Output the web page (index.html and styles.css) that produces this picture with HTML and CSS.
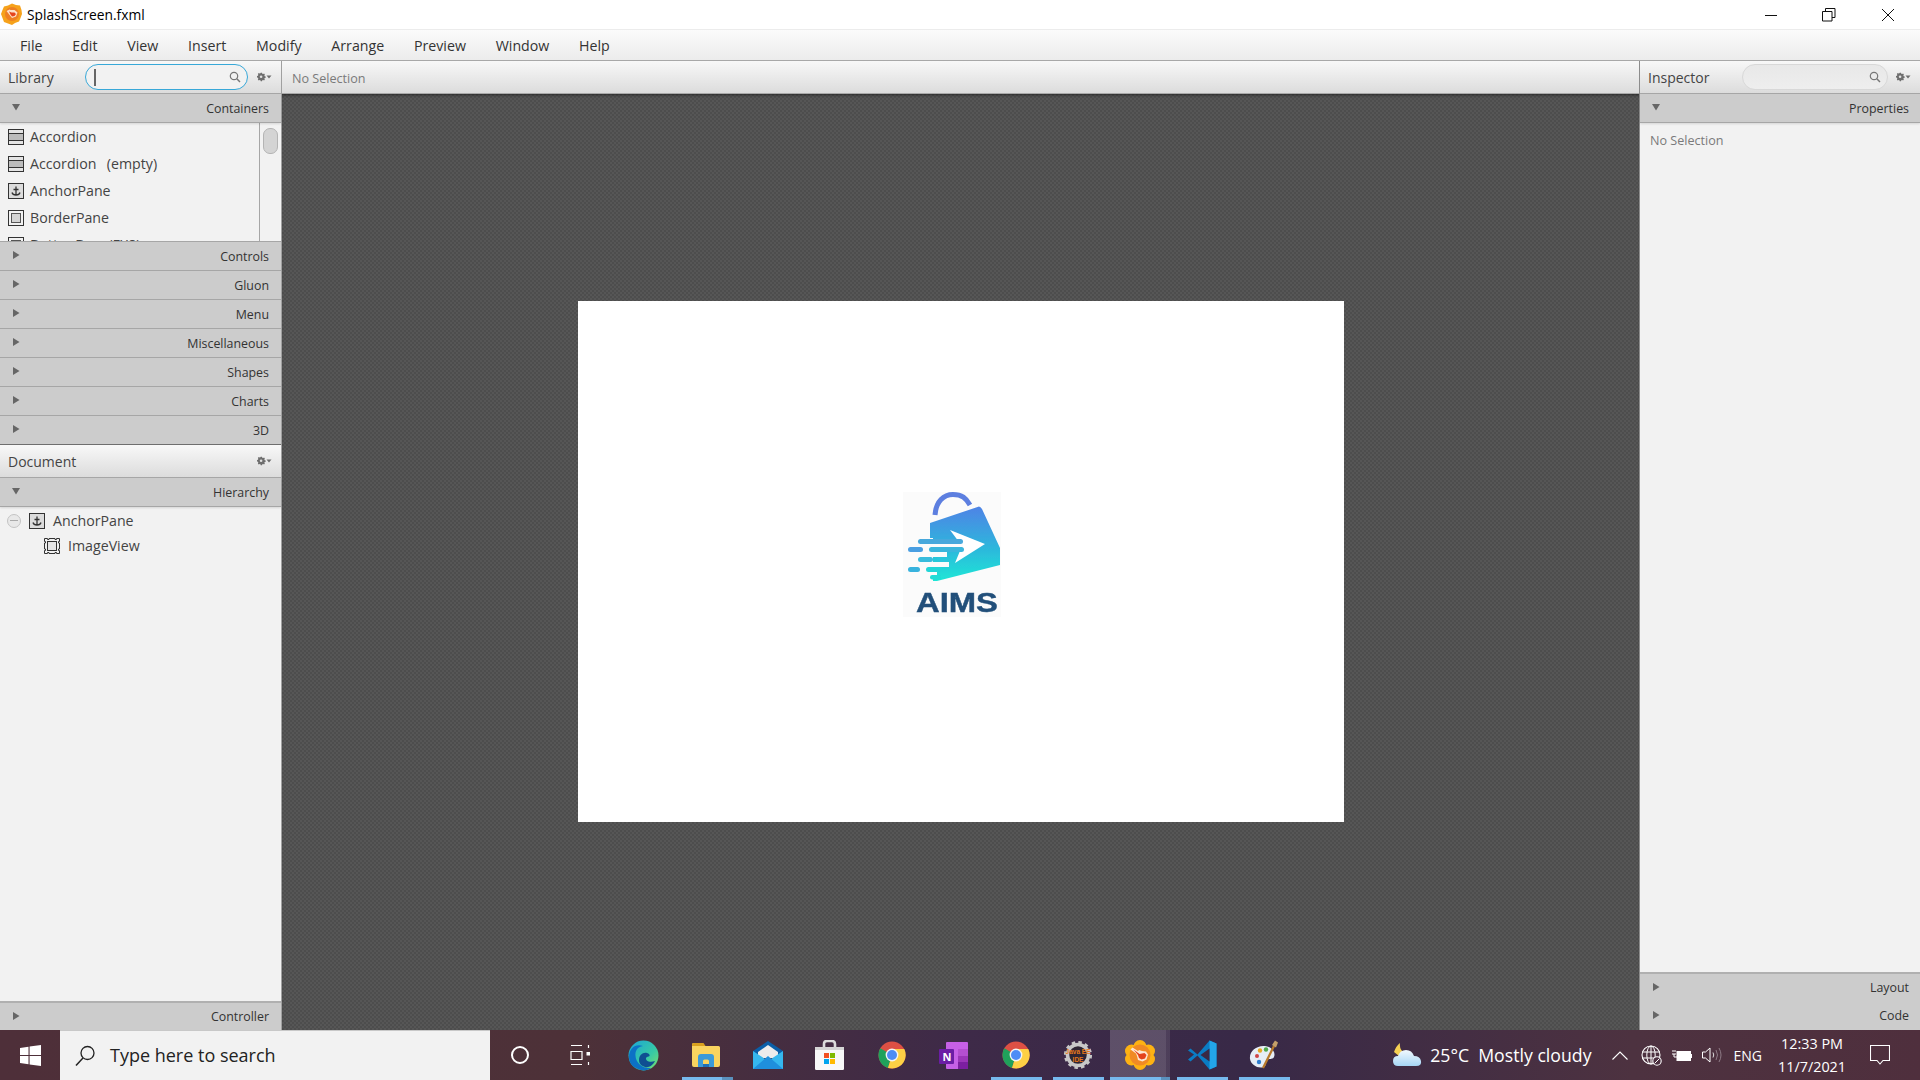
FILE: index.html
```html
<!DOCTYPE html>
<html lang="en">
<head>
<meta charset="utf-8">
<title>SplashScreen.fxml</title>
<link rel="stylesheet" href="styles.css">
</head>
<body>
<svg class="defs" width="0" height="0">
  <defs>
    <symbol id="gear" viewBox="0 0 16 10">
      <path d="M5 0.500h1.600l.3 1.200 1.100.5 1.100-.6 1 1-.6 1.100.4 1 1.200.4v1.400l-1.200.3-.4 1.100.6 1-1 1-1.100-.6-1.100.5-.3 1.100H5l-.3-1.100-1.100-.5-1 .6-1.100-1 .6-1-.4-1.100L.5 5.900V4.500l1.200-.4.4-1-.6-1.100 1.100-1 1 .6 1.100-.5z" fill="#6e6e6e" transform="translate(.6 .3) scale(.82)"/>
      <circle cx="5.100" cy="4.700" r="1.300" fill="#e2e2e2"/>
      <path d="M10.500 3.500h5l-2.500 3z" fill="#6e6e6e"/>
    </symbol>
    <symbol id="mag" viewBox="0 0 12 12">
      <circle cx="5" cy="5" r="3.700" fill="none" stroke="#777" stroke-width="1.200"/>
      <path d="M7.800 7.800l3.200 3.200" stroke="#777" stroke-width="1.500"/>
    </symbol>
    <symbol id="accordion" viewBox="0 0 16 16">
      <rect x=".5" y=".5" width="15" height="15" fill="#e4e4e4" stroke="#333"/>
      <rect x="1" y="5" width="14" height="6" fill="#bcbcbc"/>
      <path d="M1 4.500h14M1 11.500h14" stroke="#333"/>
    </symbol>
    <symbol id="anchor" viewBox="0 0 16 16">
      <rect x=".5" y=".5" width="15" height="15" fill="#dcdcdc" stroke="#333"/>
      <path d="M8 3.500v8.500M5.500 6.500h5M4 9.500c.5 2 2 2.500 4 2.500s3.500-.5 4-2.500" fill="none" stroke="#333" stroke-width="1.300"/>
    </symbol>
    <symbol id="border" viewBox="0 0 16 16">
      <rect x=".5" y=".5" width="15" height="15" fill="#f2f2f2" stroke="#333"/>
      <rect x="3.500" y="3.500" width="9" height="9" fill="#d4d4d4" stroke="#555"/>
    </symbol>
    <symbol id="right" viewBox="0 0 8 10"><path d="M1 1l6.500 4L1 9z" fill="#666"/></symbol>
    <symbol id="down" viewBox="0 0 10 8"><path d="M1 1h8L5 7.500z" fill="#666"/></symbol>
    <symbol id="chrome" viewBox="0 0 28 28">
      <circle cx="14" cy="14" r="13.500" fill="#dd5044"/>
      <path d="M14 14L2.300 7.300A13.500 13.500 0 0 0 10 27z" fill="#1fa15b"/>
      <path d="M14 8h12.300A13.500 13.500 0 0 1 14 27.500L10 27l4-13z" fill="#fdd045"/>
      <circle cx="14" cy="14" r="6.400" fill="#f4f4f4"/>
      <circle cx="14" cy="14" r="5" fill="#4d8cf5"/>
    </symbol>
  </defs>
</svg>

<div class="app">
  <header class="titlebar">
    <svg class="app-icon" viewBox="0 0 22 22" width="22" height="22">
      <path d="M11 .5l4 1.600 4 .4 1.500 4.500.5 4-1.500 4-1.500 3.500-4 1.500-3 2-4-1.500-4-1.500-1.500-4-1.500-4 1.500-4 1.500-3.500 4-1z" fill="#f6a21b"/>
      <circle cx="11" cy="11" r="7" fill="#ee7f22"/>
      <path d="M5.500 8l3-1.500 1 .5 4 0 3 2.500-1.500 4-4 1.500-2-2.500z" fill="#fde1c8"/>
      <path d="M8 8.500l2.500 1 3 0 1.500 1.500-1.500 2-2.500 .5-1.500-2z" fill="#e6431b"/>
    </svg>
    <span class="title-text">SplashScreen.fxml</span>
    <div class="win-btns">
      <svg width="14" height="14" viewBox="0 0 14 14" class="win-min"><path d="M1 7.500h12" stroke="#111"/></svg>
      <svg width="14" height="14" viewBox="0 0 14 14" class="win-max"><path d="M3.500 3.500V.5h9.500v9h-3M.5 3.500h9.500v9.500H.5z" fill="none" stroke="#111"/></svg>
      <svg width="14" height="14" viewBox="0 0 14 14" class="win-close"><path d="M1 1l12 12M13 1L1 13" stroke="#111"/></svg>
    </div>
  </header>

  <nav class="menubar">
    <span class="menu-item">File</span><span class="menu-item">Edit</span><span class="menu-item">View</span><span class="menu-item">Insert</span><span class="menu-item">Modify</span><span class="menu-item">Arrange</span><span class="menu-item">Preview</span><span class="menu-item">Window</span><span class="menu-item">Help</span>
  </nav>

  <main class="workspace">
    <aside class="panel panel-left">
      <div class="panel-head">
        <span class="panel-title">Library</span>
        <div class="search search-active"><span class="caret"></span><svg width="12" height="12" class="search-mag"><use href="#mag"/></svg></div>
        <svg width="16" height="10" class="gear"><use href="#gear"/></svg>
      </div>
      <div class="section first"><svg width="10" height="8" class="arrow-d"><use href="#down"/></svg><span>Containers</span></div>
      <div class="lib-list">
        <div class="lib-items">
          <div class="lib-row"><svg width="16" height="16"><use href="#accordion"/></svg><span>Accordion</span></div>
          <div class="lib-row"><svg width="16" height="16"><use href="#accordion"/></svg><span class="pre">Accordion  (empty)</span></div>
          <div class="lib-row"><svg width="16" height="16"><use href="#anchor"/></svg><span>AnchorPane</span></div>
          <div class="lib-row"><svg width="16" height="16"><use href="#border"/></svg><span>BorderPane</span></div>
          <div class="lib-row"><svg width="16" height="16"><use href="#border"/></svg><span class="pre">ButtonBar  (FX8)</span></div>
        </div>
        <div class="scrollbar"><div class="thumb"></div></div>
      </div>
      <div class="section"><svg width="8" height="10" class="arrow-r"><use href="#right"/></svg><span>Controls</span></div>
      <div class="section"><svg width="8" height="10" class="arrow-r"><use href="#right"/></svg><span>Gluon</span></div>
      <div class="section"><svg width="8" height="10" class="arrow-r"><use href="#right"/></svg><span>Menu</span></div>
      <div class="section"><svg width="8" height="10" class="arrow-r"><use href="#right"/></svg><span>Miscellaneous</span></div>
      <div class="section"><svg width="8" height="10" class="arrow-r"><use href="#right"/></svg><span>Shapes</span></div>
      <div class="section"><svg width="8" height="10" class="arrow-r"><use href="#right"/></svg><span>Charts</span></div>
      <div class="section section-dark"><svg width="8" height="10" class="arrow-r"><use href="#right"/></svg><span>3D</span></div>
      <div class="panel-head doc-head">
        <span class="panel-title grow">Document</span>
        <svg width="16" height="10" class="gear"><use href="#gear"/></svg>
      </div>
      <div class="section first"><svg width="10" height="8" class="arrow-d"><use href="#down"/></svg><span>Hierarchy</span></div>
      <div class="tree">
        <div class="tree-row">
          <span class="collapse"></span>
          <svg width="16" height="16"><use href="#anchor"/></svg><span>AnchorPane</span>
        </div>
        <div class="tree-row tree-child">
          <svg width="16" height="16" viewBox="0 0 16 16"><path d="M.5 .5h3v1h1.500v-1h6v1h1.500v-1h3v3h-1v1.500h1v6h-1v1.500h1v3h-3v-1h-1.500v1h-6v-1h-1.500v1h-3v-3h1v-1.500h-1v-6h1v-1.500h-1z" fill="#f2f2f2" stroke="#333"/><rect x="3.500" y="3.500" width="9" height="9" fill="#e6e6e6" stroke="#333"/></svg>
          <span>ImageView</span>
        </div>
      </div>
      <div class="section section-top"><svg width="8" height="10" class="arrow-r"><use href="#right"/></svg><span>Controller</span></div>
    </aside>

    <section class="center">
      <div class="sel-bar">No Selection</div>
      <div class="canvas">
        <div class="stage">
          <svg class="logo" width="98" height="125" viewBox="0 0 98 125">
            <defs>
              <linearGradient id="bag" x1="0" y1="0" x2="0" y2="1"><stop offset="0" stop-color="#4f83e6"/><stop offset=".55" stop-color="#2db6dc"/><stop offset="1" stop-color="#1ee6d6"/></linearGradient>
              <filter id="soft"><feGaussianBlur stdDeviation=".6"/></filter>
            </defs>
            <g filter="url(#soft)">
              <rect width="98" height="125" fill="#fbfbfb"/>
              <path d="M32 23C33 9 41 2.500 50 2.500S63 6 67 13" fill="none" stroke="#5d7fe0" stroke-width="5"/>
              <path d="M27 31L76 14.500Q77.500 14.500 79 17L97 56V73L34 89H30V46H27z" fill="url(#bag)"/>
              <path d="M47 38L82 52 52 71 59 54z" fill="#fff"/>
              <rect x="15" y="47" width="45" height="5" rx="2.500" fill="#46a8dc"/>
              <rect x="26" y="52" width="34" height="3" fill="#fbfbfb"/>
              <rect x="5" y="55" width="15" height="5" rx="2.500" fill="#4a9fe2"/>
              <rect x="26" y="55" width="35" height="5" rx="2.500" fill="#3ab6dc"/>
              <rect x="26" y="60" width="18" height="5" fill="#fbfbfb"/>
              <rect x="15" y="65" width="15" height="5" rx="2.500" fill="#39bcdd"/>
              <rect x="34" y="65" width="12" height="5" rx="2.500" fill="#2cc6dc"/>
              <rect x="28" y="70" width="18" height="5" fill="#fbfbfb"/>
              <rect x="5" y="75" width="12" height="5" rx="2.500" fill="#39b3de"/>
              <rect x="23" y="75" width="16" height="5" rx="2.500" fill="#22d6d8"/>
              <rect x="26" y="80" width="8" height="3" fill="#fbfbfb"/>
              <rect x="27" y="83" width="11" height="4.500" rx="2.200" fill="#20dcd6"/>
              <text class="logo-text" x="13" y="119.500" textLength="82" lengthAdjust="spacingAndGlyphs">AIMS</text>
            </g>
          </svg>
        </div>
      </div>
    </section>

    <aside class="panel panel-right">
      <div class="panel-head">
        <span class="panel-title">Inspector</span>
        <div class="search"><svg width="12" height="12" class="search-mag"><use href="#mag"/></svg></div>
        <svg width="16" height="10" class="gear"><use href="#gear"/></svg>
      </div>
      <div class="section first"><svg width="10" height="8" class="arrow-d"><use href="#down"/></svg><span>Properties</span></div>
      <div class="props"><span class="muted">No Selection</span></div>
      <div class="section section-top"><svg width="8" height="10" class="arrow-r"><use href="#right"/></svg><span>Layout</span></div>
      <div class="section section-last"><svg width="8" height="10" class="arrow-r"><use href="#right"/></svg><span>Code</span></div>
    </aside>
  </main>

  <footer class="taskbar">
    <div class="start">
      <svg width="21" height="21" viewBox="0 0 21 21"><path d="M0 3l8.500-1.200v8.200H0zM9.600 1.600L21 0v10H9.600zM0 11h8.500v8.200L0 18zM9.600 11H21v10L9.600 19.400z" fill="#fff"/></svg>
    </div>
    <div class="searchbox">
      <svg width="22" height="22" viewBox="0 0 22 22"><circle cx="13.500" cy="8" r="6.500" fill="none" stroke="#222" stroke-width="1.300"/><path d="M9 13L2 20.500" stroke="#222" stroke-width="1.500"/></svg>
      <span>Type here to search</span>
    </div>
    <div class="tb-icons">
      <div class="tb-cell"><svg width="20" height="20" viewBox="0 0 20 20"><circle cx="10" cy="10" r="8" fill="none" stroke="#fff" stroke-width="2"/></svg></div>
      <div class="tb-cell"><svg class="taskview" width="20" height="22" viewBox="0 0 20 22"><path d="M1 1.500h11M1 20.500h11M1 7.500h11v8H1zM18.500 1v3M18.500 18v3" fill="none" stroke="#fff" stroke-width="1.200"/><rect x="16.500" y="8" width="3.500" height="3.500" fill="#fff"/></svg></div>
      <div class="tb-cell">
        <svg width="31" height="31" viewBox="0 0 31 31"><defs><linearGradient id="edgeG" x1="0" y1="0" x2="1" y2="1"><stop offset="0" stop-color="#1ba4d8"/><stop offset=".6" stop-color="#37c9a5"/><stop offset="1" stop-color="#7fe06a"/></linearGradient></defs><circle cx="15.500" cy="15.500" r="15" fill="url(#edgeG)"/><path d="M1 17C1 8 8 3 15 6c-6 1-8 5-7.500 10C8 23 15 29 23 28c-4 3-9 3-13 1C4 27 1 22 1 17z" fill="#0c71c6"/><path d="M11 20c0-5 4-8 8-7 2 .5 3 2 2.500 3-1 1-3 .5-3.500 2-.5 3 4 5 9 3-2 4-6 7-10 6-3-1-6-3-6-7z" fill="#0f4f92"/></svg>
      </div>
      <div class="tb-cell active split">
        <svg width="28" height="24" viewBox="0 0 28 24"><path d="M0 1.500Q0 0 1.500 0h9l2 3H26.500Q28 3 28 4.500V22q0 2-2 2H2q-2 0-2-2z" fill="#f9d45f"/><path d="M0 1.500Q0 0 1.500 0h10l2 3H0z" fill="#d9a11f"/><path d="M6 24V14q0-3 3-3h10q3 0 3 3v10h-5v-6q0-1.500-1.500-1.500h-3Q11 16.500 11 18v6z" fill="#3a9ad9"/><rect x="11" y="21" width="6" height="3" fill="#1d6fb8"/></svg>
      </div>
      <div class="tb-cell">
        <svg width="30" height="28" viewBox="0 0 30 28"><path d="M0 10L15 0l15 10v3H0z" fill="#0a5ea8"/><path d="M5 11L15 4l10 7v6H5z" fill="#ececec"/><path d="M0 10l15 10 15-10v18H0z" fill="#35b7ee"/><path d="M0 28L15 15l15 13z" fill="#1f8fdc"/></svg>
      </div>
      <div class="tb-cell">
        <svg width="29" height="30" viewBox="0 0 29 30"><path d="M9 8V4q0-3 3-3h5q3 0 3 3v4" fill="none" stroke="#dcdcdc" stroke-width="2.600"/><rect y="7" width="29" height="23" rx="1.200" fill="#f8f8f8"/><rect y="7" width="29" height="3" fill="#d6d6d6"/><rect x="9" y="13" width="5" height="5" fill="#f25022"/><rect x="15" y="13" width="5" height="5" fill="#7fba00"/><rect x="9" y="19" width="5" height="5" fill="#00a4ef"/><rect x="15" y="19" width="5" height="5" fill="#ffb900"/></svg>
      </div>
      <div class="tb-cell"><svg width="28" height="28"><use href="#chrome"/></svg></div>
      <div class="tb-cell">
        <svg width="29" height="27" viewBox="0 0 29 27"><rect x="7" width="22" height="27" rx="1" fill="#c660e6"/><rect x="19" y="7" width="10" height="7" fill="#b44fd0"/><rect x="19" y="14" width="10" height="6" fill="#9b36b8"/><rect x="19" y="20" width="10" height="7" fill="#7c1fa0"/><rect y="7" width="15" height="15" rx="1" fill="#6b1da5"/><text class="one-n" x="3.500" y="19">N</text></svg>
      </div>
      <div class="tb-cell active"><svg width="28" height="28"><use href="#chrome"/></svg></div>
      <div class="tb-cell active">
        <svg width="28" height="28" viewBox="0 0 28 28"><circle cx="14" cy="14" r="10.500" fill="#2e2534" stroke="#c8c8c8" stroke-width="3.500"/><circle cx="14" cy="14" r="12.800" fill="none" stroke="#c8c8c8" stroke-width="2.500" stroke-dasharray="3.500 3.200"/><text class="java-t" x="14" y="12.500">Java EE</text><text class="java-t" x="14" y="20.500">IDE</text></svg>
      </div>
      <div class="tb-cell active focus">
        <svg width="30" height="30" viewBox="0 0 30 30"><g fill="#fdb213"><circle cx="15" cy="6.500" r="6.500"/><circle cx="23.500" cy="11" r="6.500"/><circle cx="23.500" cy="19" r="6.500"/><circle cx="15" cy="23.500" r="6.500"/><circle cx="6.500" cy="19" r="6.500"/><circle cx="6.500" cy="11" r="6.500"/></g><circle cx="15" cy="15" r="10.500" fill="#f08a24"/><path d="M5.500 9.500l2-2 5.500 3.500 1-1 3 1 4 .5 2 3-1.500 5-4 2-4.500-1.500-1-4-1-2.500z" fill="#fde5d0"/><path d="M8.500 9.500l6 4.500 5-1 2 2-1.500 3.500-3.500 1-2.500-1.500-1-3z" fill="#e4421c"/></svg>
      </div>
      <div class="tb-cell active">
        <svg width="30" height="30" viewBox="0 0 30 30"><path d="M1 10.500l2.500-2 7 6 12-14 7 3v23l-7 3-12-14-7 6-2.500-2 6-5z" fill="#0a7cc4"/><path d="M22.500 .5l7 3v23l-7 3z" fill="#23a5e8"/><path d="M22.500 8.500L13.500 15l9 6.500z" fill="#3a2944"/></svg>
      </div>
      <div class="tb-cell active">
        <svg width="30" height="30" viewBox="0 0 30 30"><path d="M1 19C0 11 8 5 16 6c7 1 11 6 9 11-1 3-5 1-7 3-2 2 0 5-3 7-6 2-13-2-14-8z" fill="#e6eef5"/><circle cx="8" cy="16" r="2" fill="#d04646"/><circle cx="11" cy="10.500" r="2.200" fill="#e8a823"/><circle cx="17" cy="9.500" r="2.200" fill="#4fa94a"/><circle cx="10" cy="22" r="2.200" fill="#2f7fd0"/><path d="M14 28L25 6" stroke="#b97a2a" stroke-width="2.200"/><path d="M23 5l3-4.500 3 2-2 5z" fill="#c5a06a"/></svg>
      </div>
    </div>
    <div class="tray">
      <svg width="30" height="26" viewBox="0 0 30 26" class="weather"><defs><linearGradient id="cloudG" x1="0" y1="0" x2="0" y2="1"><stop offset="0" stop-color="#f2f9fe"/><stop offset="1" stop-color="#a6d6f5"/></linearGradient></defs><path d="M2 10q2-6 6-9-1 5 3 9l-4 4z" fill="#f5d053"/><path d="M6 24q-5 0-5-5t5-5q2-6 8-6 6 0 8 6 6 0 7 5t-5 5z" fill="url(#cloudG)"/></svg>
      <span class="weather-text">25°C</span>
      <span class="weather-text cond">Mostly cloudy</span>
      <svg width="16" height="9" viewBox="0 0 16 9" class="chev"><path d="M.5 8.500L8 1l7.500 7.500" fill="none" stroke="#fff" stroke-width="1.100"/></svg>
      <svg width="21" height="21" viewBox="0 0 21 21" class="globe"><circle cx="10" cy="10" r="9" fill="none" stroke="#fff" stroke-width="1.100"/><ellipse cx="10" cy="10" rx="4.200" ry="9" fill="none" stroke="#fff"/><path d="M1 7h18M1 13h18M10 1v18" stroke="#fff"/><circle cx="16" cy="16" r="4.200" fill="#4c3040" stroke="#fff" stroke-width="1.100"/><path d="M13.500 18.500l5-5" stroke="#fff"/></svg>
      <svg width="20" height="13" viewBox="0 0 20 13" class="batt"><path d="M0 2h4M0 5h4M2 5v3h3" stroke="#fff" fill="none"/><rect x="5" y="2.500" width="13.500" height="9" fill="#fff" stroke="#fff"/><rect x="18.500" y="5" width="1.500" height="4" fill="#fff"/></svg>
      <svg width="20" height="16" viewBox="0 0 20 16" class="vol"><path d="M.5 5h3L8 1v14L3.500 11h-3z" fill="none" stroke="#fff"/><path d="M11 5.500q1.500 2.500 0 5" fill="none" stroke="#ddd"/><path d="M14 3q3 5 0 10M17 1q4 7 0 14" fill="none" stroke="#8e7b86"/></svg>
      <span class="lang">ENG</span>
      <div class="clock"><span>12:33 PM</span><span>11/7/2021</span></div>
      <svg width="20" height="21" viewBox="0 0 20 21" class="notif"><path d="M.5 .5h19v15h-6.500l-3 3.500-3-3.500H.5z" fill="none" stroke="#fff" stroke-width="1.100"/></svg>
    </div>
  </footer>
</div>
</body>
</html>
```
FILE: styles.css
```css
* { box-sizing: border-box; }
html, body { margin: 0; padding: 0; width: 1920px; height: 1080px; overflow: hidden; }
body { font-family: "Open Sans", "Noto Sans", sans-serif; color: #333; background: #f2f2f2; }
.defs { display: block; height: 0; }
.app { display: flex; flex-direction: column; width: 1920px; height: 1080px; }

.titlebar { flex: 0 0 30px; display: flex; align-items: center; background: #fff; border-bottom: 1px solid #ececec; padding-left: 1px; }
.app-icon { margin-right: 4px; margin-top: -2px; }
.title-text { font-size: 13.8px; color: #000; }
.win-btns { margin-left: auto; display: flex; align-items: center; }
.win-min { margin-right: 44px; }
.win-max { margin-right: 45px; }
.win-close { margin-right: 25px; }

.menubar { flex: 0 0 31px; display: flex; align-items: center; padding-left: 20px; gap: 29.8px; font-size: 14.2px; color: #333; background: linear-gradient(#fbfbfb, #ececec); border-bottom: 1px solid #a8a8a8; }

.workspace { flex: 1 1 auto; display: flex; min-height: 0; }
.panel { display: flex; flex-direction: column; background: #f2f2f2; }
.panel-left { flex: 0 0 281px; border-right: 1px solid #a0a0a0; }
.panel-right { flex: 0 0 281px; border-left: 1px solid #8c8c8c; }

.panel-head { flex: 0 0 33px; display: flex; align-items: center; padding: 0 9px 0 8px; background: linear-gradient(#f8f8f8, #dcdcdc); border-bottom: 1px solid #a8a8a8; }
.panel-title { font-size: 14px; color: #444; width: 77px; }
.panel-title.grow { flex: 1 1 auto; }
.panel-right .panel-head { padding-left: 8px; }
.panel-right .panel-title { width: 94px; }
.search { width: 163px; height: 26px; border-radius: 13px; border: 1px solid #d8d8d8; background: linear-gradient(#e8e8e8, #eeeeee); display: flex; align-items: center; padding: 0 6px 0 8px; margin-right: 8px; }
.panel-right .search { width: 146px; margin-right: 7px; }
.search-active { width: 163px; border: 1.5px solid #38a8d8; background: #f2f2f2; }
.caret { width: 1.5px; height: 17px; background: #666; }
.search-mag { margin-left: auto; }
.gear { flex: none; }

.section { flex: 0 0 29px; display: flex; align-items: center; justify-content: space-between; padding: 0 12px 0 12px; background: #cccccc; border-bottom: 1px solid #a6a6a6; font-size: 12.4px; color: #333; }
.section .arrow-r { margin-top: -2px; }
.section .arrow-d { margin-top: -2px; margin-left: -1px; }
.section.first { box-shadow: 0 1px 2px rgba(0,0,0,.12); position: relative; }
.section-dark { border-bottom-color: #6e6e6e; }
.section-last { border-bottom: 0; }
.section-top { border-top: 2px solid #b0b0b0; border-bottom: 0; }
.panel-right .section { padding-right: 11px; padding-left: 12px; }

.lib-list { flex: 0 0 119px; display: flex; overflow: hidden; border-bottom: 1px solid #a6a6a6; background: #f2f2f2; }
.lib-items { flex: 1 1 auto; min-width: 0; border-right: 1px solid #a6a6a6; height: 118px; overflow: hidden; }
.lib-row { height: 27px; display: flex; align-items: center; gap: 6px; padding-left: 8px; font-size: 14.2px; color: #444; }
.pre { white-space: pre; word-spacing: 1.5px; }
.scrollbar { flex: 0 0 21px; padding: 5px 3px 0 3px; }
.thumb { height: 26px; background: #d4d4d4; border: 1px solid #b4b4b4; border-radius: 7px; }

.tree { flex: 1 1 auto; padding-top: 1px; background: #f2f2f2; }
.tree-row { height: 25px; display: flex; align-items: center; padding-left: 7px; gap: 8px; font-size: 14.2px; color: #444; }
.collapse { width: 14px; height: 14px; border-radius: 50%; border: 1px solid #c4c4c4; background: #e8e8e8; display: flex; align-items: center; justify-content: center; }
.collapse::after { content: ""; width: 8px; height: 1.5px; background: #aaa; }
.tree-child { padding-left: 44px; }

.center { flex: 1 1 auto; display: flex; flex-direction: column; min-width: 0; }
.sel-bar { flex: 0 0 33px; display: flex; align-items: center; padding: 2px 10px 0; font-size: 12.6px; color: #7a7a7a; background: linear-gradient(#f8f8f8, #dcdcdc); border-bottom: 1px solid #a8a8a8; }
.canvas { flex: 1 1 auto; display: flex; align-items: center; justify-content: center; background-color: #565656; background-image: linear-gradient(45deg, #4d4d4d 25%, transparent 25%, transparent 75%, #4d4d4d 75%), linear-gradient(45deg, #4d4d4d 25%, transparent 25%, transparent 75%, #4d4d4d 75%); background-size: 4px 4px; background-position: 0 0, 2px 2px; box-shadow: inset 0 3px 3px -2px rgba(0,0,0,.5); }
.stage { width: 766px; height: 521px; margin-bottom: 1px; background: #fff; padding: 191px 0 0 325px; }
.logo { display: block; }
.logo-text { font-family: "Liberation Sans", sans-serif; font-weight: 700; font-size: 27px; fill: #22507a; stroke: #22507a; stroke-width: .4px; }

.props { flex: 1 1 auto; padding: 9px 9px 0 10px; font-size: 12.6px; }
.muted { color: #7a7a7a; }

.taskbar { flex: 0 0 50px; display: flex; align-items: stretch; color: #fff; background: linear-gradient(90deg, #4e2f39 0%, #4d3138 30%, #3e2a48 50%, #382947 65%, #4d3240 85%, #4f2f3d 100%); }
.start { flex: 0 0 60px; display: flex; align-items: center; justify-content: center; }
.searchbox { flex: 0 0 430px; display: flex; align-items: center; padding-left: 14px; gap: 14px; background: #f2f2f2; border-top: 1px solid #c8c8c8; color: #222; font-size: 18px; }
.searchbox span { margin-top: -2px; }
.tb-icons { display: flex; margin-left: -1.5px; }
.tb-cell { width: 62px; height: 50px; display: flex; align-items: center; justify-content: center; position: relative; }
.taskview { margin-right: 4px; }
.tb-cell.active::after { content: ""; position: absolute; left: 6px; right: 5px; bottom: 0; height: 3px; background: #76b9ed; }
.tb-cell.split::after { left: 7px; right: 4px; background: linear-gradient(90deg, #76b9ed 78%, #5a91bd 78%); }
.tb-cell.focus { background: linear-gradient(90deg, transparent 1px, rgba(255,255,255,.18) 1px, rgba(255,255,255,.18) 57px, rgba(255,255,255,.1) 57px, rgba(255,255,255,.1) 61px, transparent 61px); }
.tb-cell.focus::after { left: 1px; right: 1px; background: linear-gradient(90deg, #76b9ed 85%, #5a91bd 85%); }

.tray { margin-left: auto; display: flex; align-items: center; font-size: 17.7px; }
.weather { margin-right: 8px; }
.weather-text { margin-right: 9px; }
.cond { margin-right: 20px; }
.chev { margin-right: 13px; }
.globe { margin-right: 10px; }
.batt { margin-right: 10px; }
.vol { margin-right: 12px; }
.lang { font-size: 14px; margin-right: 14px; }
.clock { display: flex; flex-direction: column; align-items: center; font-size: 14.4px; line-height: 23px; width: 72px; margin-right: 22px; }
.notif { margin-right: 30px; }

.one-n { font-family: "Open Sans", sans-serif; font-weight: 700; font-size: 11px; fill: #fff; }
.java-t { font-family: "Liberation Sans", sans-serif; font-weight: 700; font-size: 6.5px; fill: #e7791a; text-anchor: middle; }
```
